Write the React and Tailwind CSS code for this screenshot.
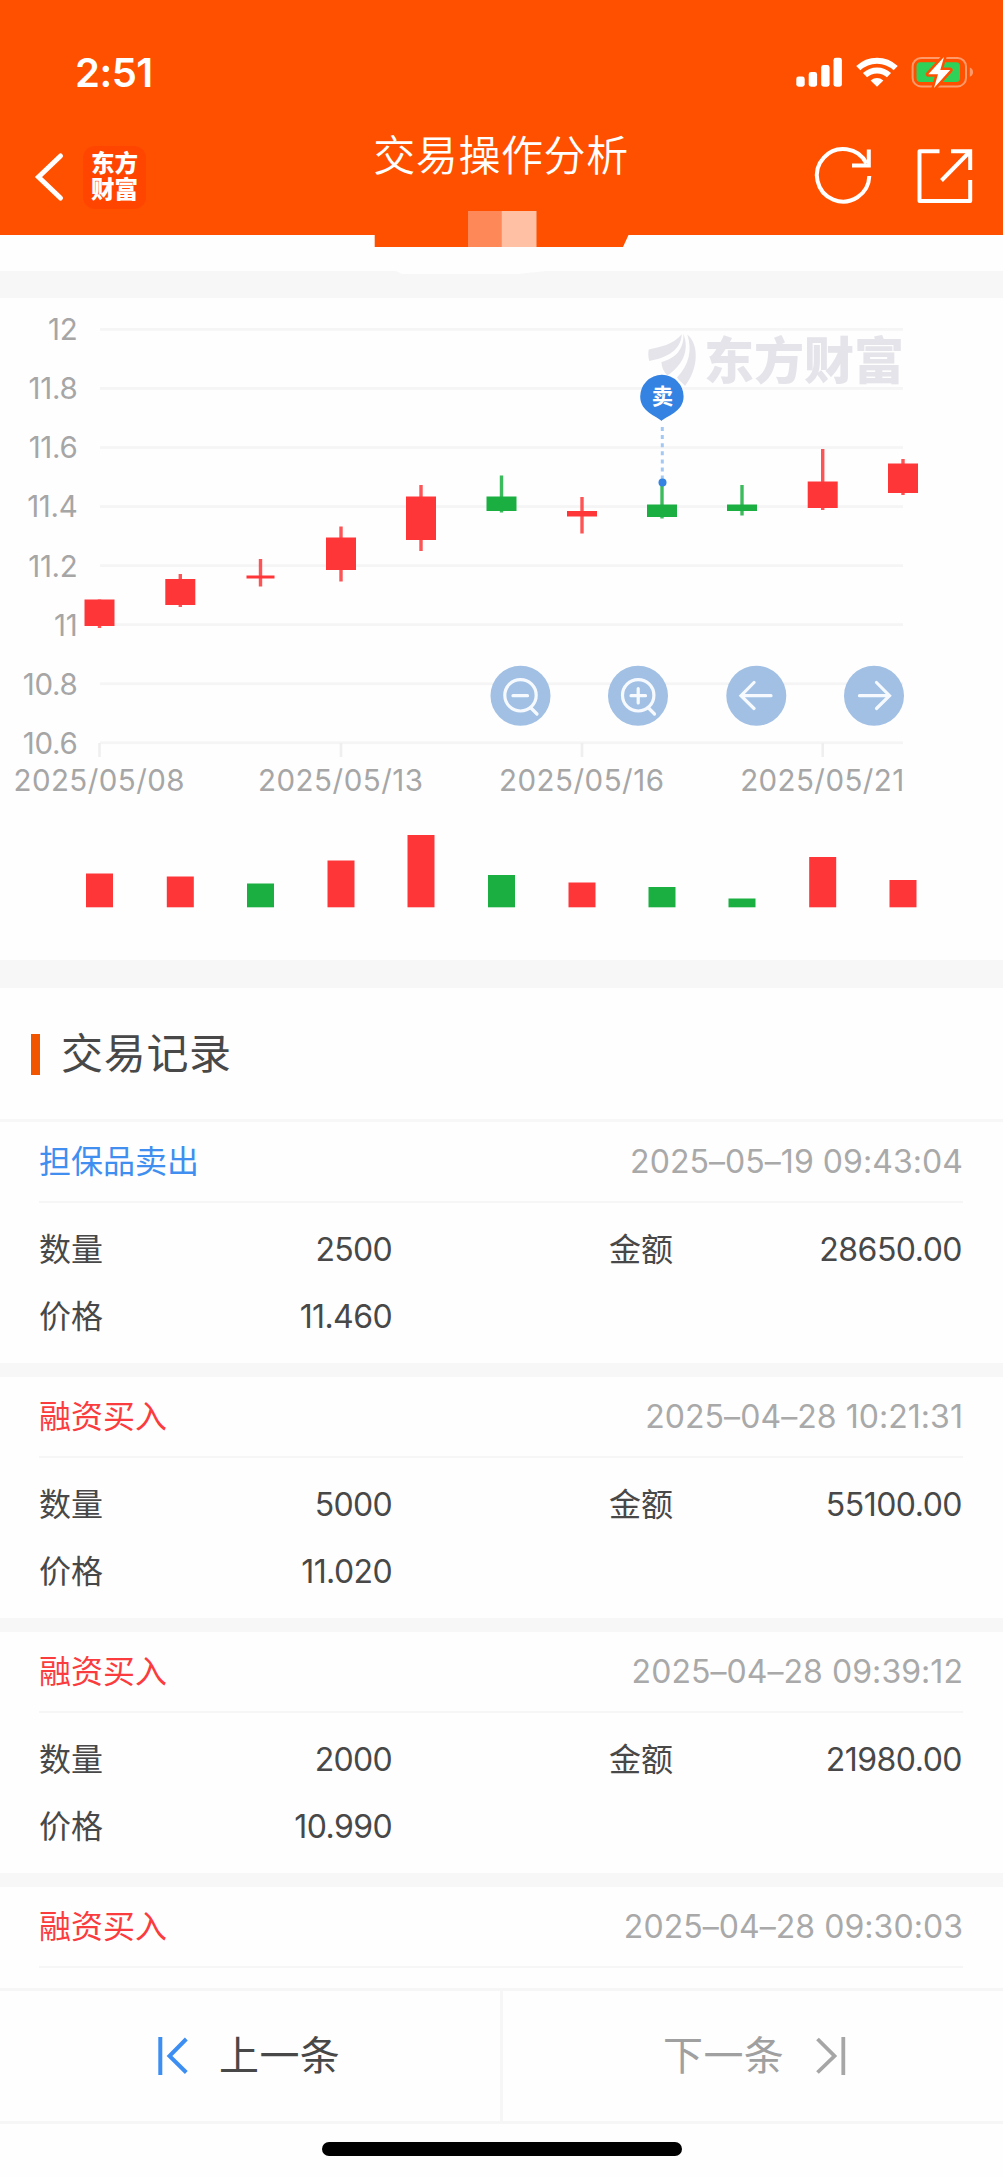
import React from 'react';

const FONT = 'font-[Inter,"Noto_Sans_CJK_SC",sans-serif]';
const RED = '#fe3638';
const GREEN = '#1aaf40';

// x centre, body top, body bottom, wick top, wick bottom, volume top, colour
const candles = [
  [99.5, 599.5, 626, 599.5, 628, 873.5, RED],
  [180.3, 579, 605, 574, 607, 876.5, RED],
  [260.5, 575.5, 578.5, 559, 586.5, 883.5, GREEN],
  [341, 537.5, 570, 526.5, 581.5, 860.5, RED],
  [421, 496.5, 540, 485, 551, 835, RED],
  [501.5, 496.5, 511, 475.5, 512.5, 875, GREEN],
  [582, 511, 516.5, 497, 533.5, 882.5, RED],
  [662, 504.5, 517, 484, 518.5, 887, GREEN],
  [742, 504.5, 511, 485, 515.5, 898.5, GREEN],
  [822.7, 481.5, 508, 449, 510, 857, RED],
  [903, 463.5, 493, 459, 495, 880, RED],
];

const gridLabels = ['12', '11.8', '11.6', '11.4', '11.2', '11', '10.8', '10.6'];

const dates = [
  [99.5, '2025/05/08', 169],
  [341, '2025/05/13', 163],
  [582, '2025/05/16', 163],
  [822.7, '2025/05/21', 162],
];

const records = [
  { type: '担保品卖出', sell: true, time: '2025–05–19 09:43:04', qty: '2500', amount: '28650.00', price: '11.460' },
  { type: '融资买入', time: '2025–04–28 10:21:31', qty: '5000', amount: '55100.00', price: '11.020' },
  { type: '融资买入', time: '2025–04–28 09:39:12', qty: '2000', amount: '21980.00', price: '10.990' },
  { type: '融资买入', time: '2025–04–28 09:30:03' },
];

function StatusIcons() {
  return (
    <svg width="180" height="36" viewBox="794 54 180 36" fill="none">
      <g fill="#fff">
        <rect x="796.3" y="76.5" width="8.4" height="10.2" rx="2.4" />
        <rect x="808.7" y="72" width="8.4" height="14.7" rx="2.4" />
        <rect x="821.2" y="65" width="8.4" height="21.7" rx="2.4" />
        <rect x="833.5" y="57.8" width="8.4" height="28.9" rx="2.4" />
        <path d="M877 86.7 L870.6 80.4 Q877 75.8 883.4 80.4 Z" />
      </g>
      <g stroke="#fff" strokeWidth="6">
        <path d="M858.3 68.2 A27 27 0 0 1 895.7 68.2" />
        <path d="M865 75.2 A17.4 17.4 0 0 1 889 75.2" />
      </g>
      <rect x="912.6" y="58" width="53.4" height="28.4" rx="8.5" stroke="#ff9a6b" strokeWidth="2" />
      <path d="M969.8 67.6 Q973 69 973 72.2 Q973 75.4 969.8 76.8 Z" fill="#ff9a6b" />
      <rect x="916.5" y="62.3" width="43.500" height="19.7" rx="4" fill="#30d158" />
      <path
        d="M944 57 L928.3 74.3 H938 L934 88 L950.2 70 H940.3 Z"
        fill="#fff"
        stroke="#ff5000"
        strokeWidth="5"
        paintOrder="stroke"
        strokeLinejoin="round"
      />
    </svg>
  );
}

function Header() {
  return (
    <header className="relative flex h-[235px] flex-col bg-[#ff5000] text-white">
      <div className="flex h-[126px] items-start justify-between pt-[54px] pr-[29px] pl-[75px]">
        <div className="text-[40px] leading-[37px] font-semibold tracking-[-0.5px]">2:51</div>
        <StatusIcons />
      </div>
      <div className="flex h-[102px] items-center justify-between pr-[29px] pl-[34px]">
        <div className="flex w-[277px] items-center gap-[17px]">
          <svg width="32" height="52" viewBox="34 151 32 52" fill="none" stroke="#fff" strokeWidth="5" strokeLinecap="round">
            <path d="M60.5 156 L38.5 177 L60.5 198" />
          </svg>
          <div className="flex h-[63px] w-[63px] flex-col items-center justify-center rounded-xl bg-[#ff4500] text-[23.5px] leading-[26px] font-black">
            <span>东方</span>
            <span>财富</span>
          </div>
        </div>
        <h1 className="-mt-[42px] -ml-[3px] text-[42px] leading-[50px] font-[350] tracking-[0.6px]">交易操作分析</h1>
        <div className="flex w-[280px] justify-end">
          <svg width="164" height="64" viewBox="810 145 164 64" fill="none" stroke="#fff" strokeWidth="4">
            <path d="M869.3 176 A26.2 26.2 0 1 1 866.5 163.5" />
            <path d="M868.8 149.5 V165.5 H852" />
            <path d="M939.5 151.2 H919.5 V201 H970.2 V180" strokeLinejoin="round" />
            <path d="M951 151.2 H970.2 V170 M941.5 180.5 L969.5 152" />
          </svg>
        </div>
      </div>
      <div className="absolute top-[211px] left-[374px] h-[36px] w-[255px]">
        <svg width="255" height="36" viewBox="374 211 255 36">
          <path d="M374.7 211 V247 H623 L628.5 235 V211 Z" fill="#ff5000" />
          <rect x="468" y="211" width="33.5" height="36" fill="#ff8858" />
          <rect x="501.5" y="211" width="35" height="36" fill="#ffc0a3" />
        </svg>
      </div>
    </header>
  );
}

function Chart() {
  return (
    <svg className={`block ${FONT}`} width="1003" height="662" viewBox="0 298 1003 662">
      <g fill="#f5f5f6">
        {gridLabels.map((label, i) => (
          <rect key={label} x="100" y={328 + i * 59.05} width="803" height="2.8" />
        ))}
        {dates.map(([x]) => (
          <rect key={x} x={x - 1.3} y="743" width="2.6" height="14" fill="#efefef" />
        ))}
      </g>
      <g fill="#a6a6a6" fontSize="29.5">
        {gridLabels.map((label, i) => (
          <text key={label} x="77.5" y={340.3 + i * 59.05} textAnchor="end" letterSpacing="-0.3">
            {label}
          </text>
        ))}
        {dates.map(([x, label, w]) => (
          <text key={label} x={x - w / 2 - 1.5} y="790.5" textLength={w + 2}>
            {label}
          </text>
        ))}
      </g>
      <g fill="#e5e4ea">
        <path d="M648.7 349.5 C660 347 673 345 681.8 334.3 C681 350 667 358 649.3 361 C648 357 648.2 353 648.7 349.5 Z" />
        <path d="M683.3 333.5 C684.5 348 676 358.5 661.5 362 C661.5 367 663.500 371.500 667.5 375.5 C681 366 690.500 352 683.3 333.5 Z" />
        <path d="M687.3 334.500 C699 344 699 368 685 386 C682.500 383 679 380.500 677 377.5 C689 365 692.500 350 687.3 334.500 Z" />
        <text x="704" y="379" fontSize="50" fontWeight="900" textLength="200">
          东方财富
        </text>
      </g>
      {candles.map(([x, top, bottom, high, low, vol, color], i) => {
        const body = i === 2 ? RED : color;
        return (
          <g key={x}>
            <rect x={x - 1.7} y={high} width="3.4" height={low - high} fill={body} opacity="0.85" />
            <rect x={i === 2 ? x - 14 : x - 15} y={top} width={i === 2 ? 28 : 30} height={bottom - top} fill={body} />
            <rect x={x - 13.5} y={vol} width="27" height={907.3 - vol} fill={color} />
          </g>
        );
      })}
      <path d="M662.3 427 V480" stroke="#a3c8f3" strokeWidth="3" strokeDasharray="4 4.1" />
      <circle cx="662.5" cy="482.5" r="4" fill="#3482e2" />
      <path
        d="M661.5 421 C657 416 640.2 412 640.2 396.5 A21.7 21.7 0 1 1 683.6 396.5 C683.6 412 666 416 661.5 421 Z"
        fill="#3482e2"
      />
      <text x="662.5" y="404.3" fontSize="21.5" fontWeight="600" fill="#fff" textAnchor="middle">
        卖
      </text>
      <g fill="#a1c0e4">
        {[520.5, 638, 756.3, 874].map((x) => (
          <circle key={x} cx={x} cy="695.7" r="30" />
        ))}
      </g>
      <g fill="none" stroke="#f6faff" strokeWidth="3.2" strokeLinecap="round">
        <path d="M513 695.7 H527.5 M530.5 707.5 L537 714" />
        <circle cx="520.5" cy="695.3" r="15.7" />
        <path d="M631 695.7 H645.5 M638.2 688.5 V703 M648 707.5 L654.5 714" />
        <circle cx="638.2" cy="695.3" r="15.7" />
        <path d="M754 682.5 L741 695.7 L754 708.5 M741.5 695.7 H771" />
        <path d="M876.5 682.5 L889.5 695.7 L876.5 708.5 M889 695.7 H859.5" />
      </g>
    </svg>
  );
}

function Record({ type, sell, time, qty, amount, price }) {
  return (
    <article className="flex h-[255px] shrink-0 flex-col border-b-[14px] border-[#f7f7f7] text-[32px] leading-[40px] text-[#484848]">
      <div className="mr-[40px] ml-[39px] flex h-[81px] shrink-0 items-center justify-between border-b-2 border-[#f6f6f6] pt-px">
        <span className={sell ? 'text-[#3f8ef0]' : 'text-[#fb3c3e]'}>{type}</span>
        <span className="text-[32px] tracking-[0.05px] text-[#a9a9a9]">{time}</span>
      </div>
      {qty && (
        <div className="grid grid-cols-[353px_217px_1fr] gap-y-[27px] pt-[27px] pr-[41px] pl-[39px]">
          <div className="flex justify-between">
            <span>数量</span>
            <span className="tracking-[-0.7px]">{qty}</span>
          </div>
          <div />
          <div className="flex justify-between">
            <span>金额</span>
            <span className="tracking-[-0.5px]">{amount}</span>
          </div>
          <div className="flex justify-between">
            <span>价格</span>
            <span className="tracking-[-0.6px]">{price}</span>
          </div>
        </div>
      )}
    </article>
  );
}

function Footer() {
  return (
    <footer className="flex h-[189px] shrink-0 flex-col bg-[#fefefe] text-[40px]">
      <div className="flex h-[136px] border-y-[3px] border-[#f6f6f6]">
        <button className="flex w-[503px] items-center border-r-[3px] border-[#f6f6f6] pl-[156px] text-[#484848]">
          <svg width="34" height="42" viewBox="156 2036 34 42" fill="none" stroke="#3d8ef2" strokeWidth="4">
            <path d="M160.3 2038 V2076 M186.3 2040 L169.5 2057 L186.3 2073.5" />
          </svg>
          <span className="ml-[29px] tracking-[0.4px]">上一条</span>
        </button>
        <button className="flex flex-1 items-center pl-[160px] text-[#a0a0a0]">
          <span className="tracking-[0.4px]">下一条</span>
          <svg className="ml-[31px]" width="34" height="42" viewBox="814 2036 34 42" fill="none" stroke="#a6a6a6" strokeWidth="3.8">
            <path d="M842.3 2038 V2076 M816.5 2040 L833.5 2057 L816.5 2073.5" />
          </svg>
        </button>
      </div>
      <div className="mt-[18px] h-[14px] w-[360px] self-center rounded-full bg-black" />
    </footer>
  );
}

export default function App() {
  return (
    <div className={`flex h-[2177px] w-[1003px] flex-col overflow-hidden bg-[#fefefe] ${FONT}`}>
      <Header />
      <div className="h-[36px] shrink-0" />
      <div className="flex h-[27px] shrink-0 justify-center bg-[#f7f7f7]">
        <svg className="-ml-[62px]" width="150" height="4" viewBox="0 0 150 4">
          <path d="M0 0 H150 L122 3 H6 Z" fill="#fefefe" />
        </svg>
      </div>
      <Chart />
      <div className="h-[28px] shrink-0 bg-[#f7f7f7]" />
      <section className="flex h-[134px] shrink-0 items-center border-b-[3px] border-[#f7f7f7] pt-px pl-[31px]">
        <div className="h-[41px] w-[9px] bg-[#f25500]" />
        <h2 className="ml-[21px] text-[42px] leading-[50px] tracking-[0.7px] text-[#484848]">交易记录</h2>
      </section>
      <section className="flex min-h-0 flex-1 flex-col overflow-hidden">
        {records.map((r) => (
          <Record key={r.time} {...r} />
        ))}
      </section>
      <Footer />
    </div>
  );
}
